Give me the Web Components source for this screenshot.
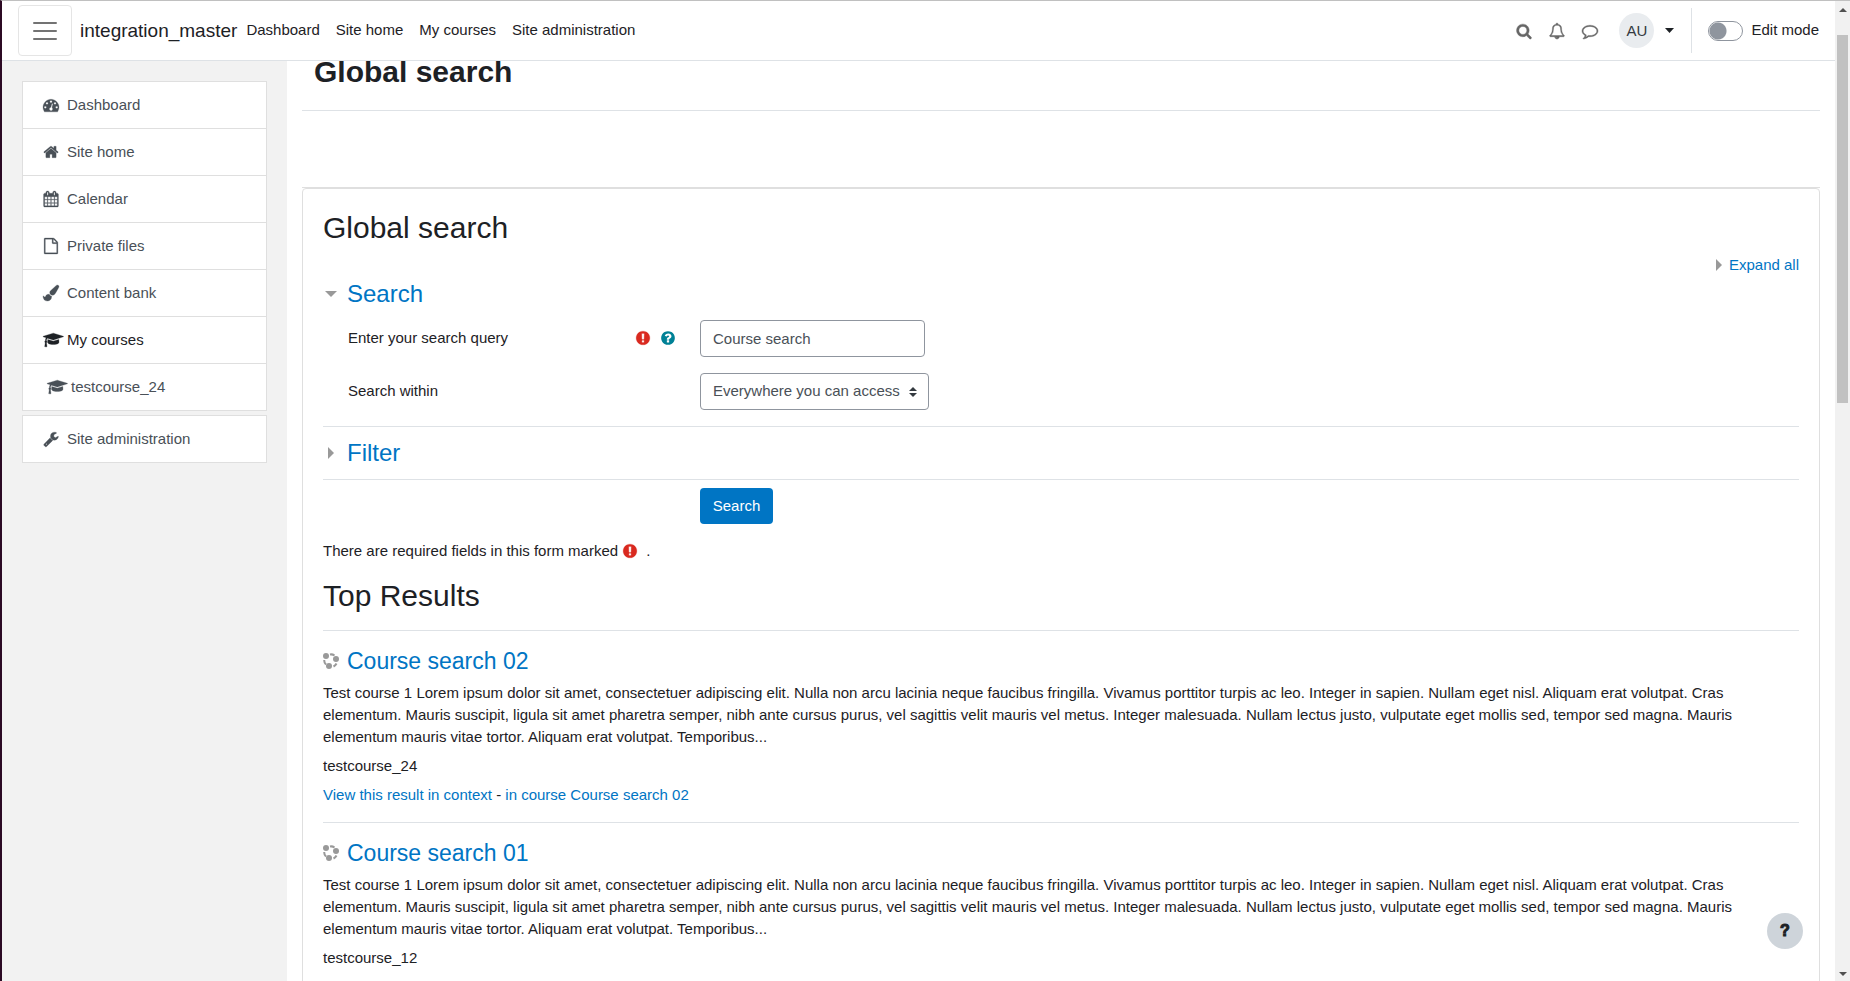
<!DOCTYPE html>
<html lang="en">
<head>
<meta charset="utf-8">
<title>Global search</title>
<style>
  html, body { margin: 0; height: 100%; overflow: hidden; }
  body {
    font: 15px/22px "Liberation Sans", Arial, sans-serif;
    color: #1d2125;
    background: #fff;
    --link: #0075c4;
    --line: #dee2e6;
    --box: #dfdfdf;
  }
</style>
</head>
<body>
<page-shell>
  <top-bar slot="bar"></top-bar>
  <nav-drawer slot="drawer">
    <nav-item icon="dash">Dashboard</nav-item>
    <nav-item icon="home">Site home</nav-item>
    <nav-item icon="calendar">Calendar</nav-item>
    <nav-item icon="file">Private files</nav-item>
    <nav-item icon="brush">Content bank</nav-item>
    <nav-item icon="cap" active>My courses</nav-item>
    <nav-item icon="cap" nested>testcourse_24</nav-item>
    <nav-item slot="admin" icon="wrench">Site administration</nav-item>
  </nav-drawer>
  <page-header>Global search</page-header>
  <content-card>
    <search-form></search-form>
    <result-list>
      <search-result heading="Course search 02" course="testcourse_24" context>Test course 1 Lorem ipsum dolor sit amet, consectetuer adipiscing elit. Nulla non arcu lacinia neque faucibus fringilla. Vivamus porttitor turpis ac leo. Integer in sapien. Nullam eget nisl. Aliquam erat volutpat. Cras elementum. Mauris suscipit, ligula sit amet pharetra semper, nibh ante cursus purus, vel sagittis velit mauris vel metus. Integer malesuada. Nullam lectus justo, vulputate eget mollis sed, tempor sed magna. Mauris elementum mauris vitae tortor. Aliquam erat volutpat. Temporibus...</search-result>
      <search-result heading="Course search 01" course="testcourse_12">Test course 1 Lorem ipsum dolor sit amet, consectetuer adipiscing elit. Nulla non arcu lacinia neque faucibus fringilla. Vivamus porttitor turpis ac leo. Integer in sapien. Nullam eget nisl. Aliquam erat volutpat. Cras elementum. Mauris suscipit, ligula sit amet pharetra semper, nibh ante cursus purus, vel sagittis velit mauris vel metus. Integer malesuada. Nullam lectus justo, vulputate eget mollis sed, tempor sed magna. Mauris elementum mauris vitae tortor. Aliquam erat volutpat. Temporibus...</search-result>
    </result-list>
  </content-card>
  <scroll-rail slot="rail"></scroll-rail>
  <help-button slot="help"></help-button>
</page-shell>

<script>
const ICONS = {
  search: 'M1216 832q0-185-131.5-316.5t-316.5-131.5-316.5 131.5-131.5 316.5 131.5 316.5 316.5 131.5 316.5-131.5 131.5-316.5zm512 832q0 52-38 90t-90 38q-54 0-90-38l-343-342q-179 124-399 124-143 0-273.5-55.5t-225-150-150-225-55.5-273.5 55.5-273.5 150-225 225-150 273.5-55.5 273.5 55.5 225 150 150 225 55.5 273.5q0 220-124 399l343 343q37 37 37 90z',
  bell: 'M912 1696q0-16-16-16-59 0-101.5-42.5t-42.5-101.5q0-16-16-16t-16 16q0 73 51.5 124.5t124.5 51.5q16 0 16-16zm-666-288h1300q-266-300-266-832 0-51-24-105t-69-103-121.5-80.5-169.5-31.5-169.5 31.5-121.5 80.5-69 103-24 105q0 532-266 832zm1482 0q0 52-38 90t-90 38h-448q0 106-75 181t-181 75-181-75-75-181h-448q-52 0-90-38t-38-90q50-42 91-88t85-119.5 74.5-158.5 50-206 19.5-260q0-152 117-282.5t307-158.5q-8-19-8-39 0-40 28-68t68-28 68 28 28 68q0 20-8 39 190 28 307 158.5t117 282.5q0 139 19.5 260t50 206 74.5 158.5 85 119.5 91 88z',
  comment: 'M896 384q-204 0-381.5 69.5t-282 187.5-104.5 255q0 112 71.5 213.5t201.5 175.5l87 50-27 96q-24 91-70 172 152-63 275-171l43-38 57 6q69 8 130 8 204 0 381.5-69.5t282-187.5 104.5-255-104.5-255-282-187.5-381.5-69.5zm896 512q0 174-120 321.5t-326 233-450 85.5q-70 0-145-8-198 175-460 242-49 14-114 22h-5q-15 0-27-10.5t-16-27.5v-1q-3-4-.5-12t2-10 4.5-9.5l6-9 7-8.5 8-9q7-8 31-34.5t34.5-38 31-39.5 32.5-51 27-59 26-76q-157-89-247.5-220t-90.5-281q0-130 71-248.5t191-204.5 286-136.5 348-50.5 348 50.5 286 136.5 191 204.5 71 248.5z',
  dash: 'M384 1152q0-53-37.5-90.5t-90.5-37.5-90.5 37.5-37.5 90.5 37.5 90.5 90.5 37.5 90.5-37.5 37.5-90.5zm192-448q0-53-37.5-90.5t-90.5-37.5-90.5 37.5-37.5 90.5 37.5 90.5 90.5 37.5 90.5-37.5 37.5-90.5zm428 481l101-382q6-26-7.5-48.5t-38.5-29.5-48 6.5-30 39.5l-101 382q-60 5-107 43.5t-63 98.5q-20 77 20 146t117 89 146-20 89-117q16-60-6-117t-72-91zm660-33q0-53-37.5-90.5t-90.5-37.5-90.5 37.5-37.5 90.5 37.5 90.5 90.5 37.5 90.5-37.5 37.5-90.5zm-640-640q0-53-37.5-90.5t-90.5-37.5-90.5 37.5-37.5 90.5 37.5 90.5 90.5 37.5 90.5-37.5 37.5-90.5zm448 192q0-53-37.5-90.5t-90.5-37.5-90.5 37.5-37.5 90.5 37.5 90.5 90.5 37.5 90.5-37.5 37.5-90.5zm320 448q0 261-141 483-19 29-54 29h-1402q-35 0-54-29-141-221-141-483 0-182 71-348t191-286 286-191 348-71 348 71 286 191 191 286 71 348z',
  home: 'M1472 992v480q0 26-19 45t-45 19h-384v-384h-256v384h-384q-26 0-45-19t-19-45v-480q0-1 .5-3t.5-3l575-474 575 474q1 2 1 6zm223-69l-62 74q-8 9-21 11h-3q-13 0-21-7l-692-577-692 577q-12 8-24 7-13-2-21-11l-62-74q-8-10-7-23.5t11-21.5l719-599q32-26 76-26t76 26l244 204v-195q0-14 9-23t23-9h192q14 0 23 9t9 23v408l219 182q10 8 11 21.5t-7 23.5z',
  calendar: 'M192 1664h288v-288h-288v288zm352 0h320v-288h-320v288zm-352-352h288v-320h-288v320zm352 0h320v-320h-320v320zm-352-384h288v-288h-288v288zm736 736h320v-288h-320v288zm-384-736h320v-288h-320v288zm768 736h288v-288h-288v288zm-384-352h320v-320h-320v320zm-352-864v-288q0-13-9.5-22.5t-22.5-9.5h-64q-13 0-22.5 9.5t-9.5 22.5v288q0 13 9.5 22.5t22.5 9.5h64q13 0 22.5-9.5t9.5-22.5zm736 864h288v-320h-288v320zm-384-384h320v-288h-320v288zm384 0h288v-288h-288v288zm32-480v-288q0-13-9.5-22.5t-22.5-9.5h-64q-13 0-22.5 9.5t-9.5 22.5v288q0 13 9.5 22.5t22.5 9.5h64q13 0 22.5-9.5t9.5-22.5zm384-64v1280q0 52-38 90t-90 38h-1408q-52 0-90-38t-38-90v-1280q0-52 38-90t90-38h128v-96q0-66 47-113t113-47h64q66 0 113 47t47 113v96h384v-96q0-66 47-113t113-47h64q66 0 113 47t47 113v96h128q52 0 90 38t38 90z',
  file: 'M1596 380q28 28 48 76t20 88v1152q0 40-28 68t-68 28h-1344q-40 0-68-28t-28-68v-1600q0-40 28-68t68-28h896q40 0 88 20t76 48zm-444-244v376h376q-10-29-22-41l-313-313q-12-12-41-22zm384 1528v-1024h-416q-40 0-68-28t-28-68v-416h-768v1536h1280z',
  brush: 'M1615 0q70 0 122.5 46.5t52.5 116.5q0 63-45 151-332 629-465 752-97 91-218 91-126 0-216.5-92.5t-90.5-219.5q0-128 92-212l638-579q59-54 130-54zm-909 1034q39 76 106.5 130t150.5 76l1 71q4 213-129.5 347t-348.5 134q-123 0-218-46.5t-152.5-127.5-86.5-183-29-220q7 5 41 30t62 44.5 59 36.5 46 17q41 0 55-37 25-66 57.5-112.5t69.5-76 88-47.5 103-25.5 125-10.5z',
  cap: 'M1774 836l18 316q4 69-82 128t-235 93.5-323 34.5-323-34.5-235-93.5-82-128l18-316 574 181q22 7 48 7t48-7zm530-324q0 23-22 31l-1120 352q-4 1-10 1t-10-1l-652-206q-43 34-71 111.5t-34 178.5q63 36 63 109 0 69-58 107l58 433q2 14-8 25-9 11-24 11h-192q-15 0-24-11-10-11-8-25l58-433q-58-38-58-107 0-73 65-111 11-207 98-330l-333-104q-22-8-22-31t22-31l1120-352q4-1 10-1t10 1l1120 352q22 8 22 31z',
  wrench: 'M448 1472q0-26-19-45t-45-19-45 19-19 45 19 45 45 19 45-19 19-45zm644-420l-682 682q-37 37-90 37-52 0-91-37l-106-108q-38-36-38-90 0-53 38-91l681-681q39 98 114.5 173.5t173.5 114.5zm634-435q0 39-23 106-47 134-164.5 217.5t-258.5 83.5q-185 0-316.5-131.5t-131.5-316.5 131.5-316.5 316.5-131.5q58 0 121.5 16.5t107.5 46.5q16 11 16 28t-16 28l-293 169v224l193 107q5-3 79-48.5t135.5-81 70.5-35.5q15 0 23.5 10t8.5 25z',
  required: 'M896 128q209 0 385.5 103t279.5 279.5 103 385.5-103 385.5-279.5 279.5-385.5 103-385.5-103-279.5-279.5-103-385.5 103-385.5 279.5-279.5 385.5-103zm128 1247v-190q0-14-9-23.5t-22-9.5h-192q-13 0-23 10t-10 23v190q0 13 10 23t23 10h192q13 0 22-9.5t9-23.5zm-2-344l18-621q0-12-10-18-10-8-24-8h-220q-14 0-24 8-10 6-10 18l17 621q0 10 10 17.5t24 7.5h185q14 0 23.5-7.5t10.5-17.5z',
  help: 'M1024 1376v-192q0-14-9-23t-23-9h-192q-14 0-23 9t-9 23v192q0 14 9 23t23 9h192q14 0 23-9t9-23zm256-672q0-88-55.5-163t-138.5-116-170-41q-243 0-371 213-15 24 8 42l132 100q7 6 19 6 16 0 25-12 53-68 86-92 34-24 86-24 48 0 85.5 26t37.5 59q0 38-20 61t-68 45q-63 28-115.5 86.5t-52.5 125.5v36q0 14 9 23t23 9h192q14 0 23-9t9-23q0-19 21.5-49.5t54.5-49.5q32-18 49-28.5t46-35 44.5-48 28-60.5 12.5-81zm384 192q0 209-103 385.5t-279.5 279.5-385.5 103-385.5-103-279.5-279.5-103-385.5 103-385.5 279.5-279.5 385.5-103 385.5 103 279.5 279.5 103 385.5z'
};

const BASE = '<style>*{box-sizing:border-box}a{color:var(--link);text-decoration:none}button,input,select{font:inherit;margin:0}h1,h2,h3,p{margin:0;font-weight:400}</style>';

function define(name, render) {
  customElements.define(name, class extends HTMLElement {
    constructor() {
      super();
      this.attachShadow({ mode: 'open' });
    }
    connectedCallback() {
      this.shadowRoot.innerHTML = BASE + render(this);
    }
  });
}

define('fa-icon', el => {
  const name = el.getAttribute('name');
  const wide = name === 'cap';
  return `<style>
    :host { display: inline-flex; flex: none; }
    svg { display: block; fill: currentColor; stroke: currentColor; stroke-width: var(--weight, 0); overflow: visible; }
  </style>
  <svg width="${wide ? 21 : 16}" height="16" viewBox="0 0 ${wide ? 2352 : 1792} 1792" aria-hidden="true"><path d="${ICONS[name]}"/></svg>`;
});

define('page-shell', () => `<style>
    :host {
      display: grid;
      grid-template: auto minmax(0, 1fr) / 285px minmax(0, 1fr) 15px;
      height: 100vh;
      box-sizing: border-box;
      border-top: 1px solid #c0c0c0;
      border-left: 2px solid #2c0a24;
      overflow: hidden;
    }
    .bar { grid-area: 1 / 1 / 2 / 3; z-index: 1; }
    .drawer { grid-area: 2 / 1; background: #f2f2f2; padding: 20px; }
    main { grid-area: 2 / 2; padding: 0 15px; overflow: hidden; }
    .rail { grid-area: 1 / 3 / 3 / 4; display: grid; }
    .help { position: fixed; right: 47px; bottom: 32px; }
  </style>
  <header class="bar"><slot name="bar"></slot></header>
  <aside class="drawer"><slot name="drawer"></slot></aside>
  <main><slot></slot></main>
  <div class="rail"><slot name="rail"></slot></div>
  <div class="help"><slot name="help"></slot></div>`);

define('top-bar', () => `<style>
    :host {
      display: flex;
      align-items: center;
      height: 60px;
      box-sizing: border-box;
      padding: 0 16px;
      background: #fff;
      border-bottom: 1px solid var(--line);
    }
    .burger {
      width: 54px; height: 51px; padding: 0;
      display: grid; place-items: center;
      background: none;
      border: 1px solid #e5e5e5;
      border-radius: 4px;
    }
    .brand { font-size: 19px; margin: 0 9px 0 8px; color: inherit; }
    nav { display: flex; gap: 16px; padding-bottom: 2px; }
    nav a { color: inherit; }
    .tools { margin-left: auto; display: flex; align-items: center; color: #666; --weight: 50; }
    .icon { border: 0; background: none; padding: 0; color: inherit; display: flex; margin-right: 17px; }
    .user { border: 0; background: none; padding: 0; margin-left: 4px; display: flex; align-items: center; gap: 11px; color: #1d2125; }
    .avatar { width: 35px; height: 35px; border-radius: 50%; background: #e9ecef; color: #343a40; display: grid; place-items: center; }
    .mode { display: flex; align-items: center; gap: 8px; height: 45px; margin-left: 17px; padding-left: 16px; border-left: 1px solid var(--line); color: #1d2125; }
    .mode label { padding-bottom: 2px; }
    input {
      appearance: none;
      width: 35px; height: 20px;
      border: 1px solid #8f959e;
      border-radius: 10px;
      background: radial-gradient(circle at 9px 9px, #8f959e 8px, #fff 9px);
    }
  </style>
  <button class="burger" aria-label="Side panel">
    <svg width="30" height="30" viewBox="0 0 30 30" stroke="#000" stroke-opacity=".55" stroke-width="2" stroke-linecap="round"><path d="M4 7h22M4 15h22M4 23h22"/></svg>
  </button>
  <a class="brand" href="#">integration_master</a>
  <nav><a href="#">Dashboard</a><a href="#">Site home</a><a href="#">My courses</a><a href="#">Site administration</a></nav>
  <div class="tools">
    <button class="icon" aria-label="Search"><fa-icon name="search"></fa-icon></button>
    <button class="icon" aria-label="Notifications"><fa-icon name="bell"></fa-icon></button>
    <button class="icon" aria-label="Messages"><fa-icon name="comment"></fa-icon></button>
    <button class="user"><span class="avatar">AU</span><svg width="9" height="5" viewBox="0 0 9 5"><path d="M0 0h9L4.500 5z" fill="#1d2125"/></svg></button>
    <div class="mode"><input type="checkbox" role="switch" id="edit"><label for="edit">Edit mode</label></div>
  </div>`);

define('nav-drawer', () => `<style>
    :host { display: flex; flex-direction: column; gap: 4px; }
    nav { background: #fff; border: 1px solid var(--box); border-bottom: 0; }
  </style>
  <nav aria-label="Site"><slot></slot></nav>
  <nav aria-label="Administration"><slot name="admin"></slot></nav>`);

define('nav-item', el => `<style>
    :host { display: block; border-bottom: 1px solid var(--box); --weight: 30; }
    a { display: flex; align-items: center; height: 46px; padding: 0 20px; color: #495057; }
    :host([active]) a { color: #1d2125; }
    :host([nested]) a { padding-left: 24px; }
    .mark { width: 24px; display: flex; }
  </style>
  <a href="#"><span class="mark"><fa-icon name="${el.getAttribute('icon')}"></fa-icon></span><slot></slot></a>`);

define('page-header', () => `<style>
    :host { display: block; padding: 0 12px 27px; border-bottom: 1px solid var(--line); }
    h1 { font-size: 30px; line-height: 22px; font-weight: 700; }
  </style>
  <h1><slot></slot></h1>`);

define('content-card', () => `<style>
    :host { display: block; margin-top: 76px; border-top: 1px solid var(--box); }
    section { border: 1px solid var(--box); border-radius: 4px; padding: 21px 20px; height: 100vh; }
    h2 { font-size: 30px; line-height: 36px; margin-bottom: 8px; }
  </style>
  <section><h2>Global search</h2><slot></slot></section>`);

define('search-form', () => `<style>
    :host { display: block; }
    .expand { display: flex; justify-content: flex-end; align-items: center; gap: 7px; margin-bottom: 4px; }
    .head { display: flex; align-items: center; line-height: 28px; font-size: 24px; }
    .twist { width: 24px; display: flex; }
    .twist svg { margin-left: 2px; }
    .closed svg { margin-left: 5px; }
    .closed { border: 1px solid var(--line); border-width: 1px 0; padding: 12px 0; }
    svg { display: block; fill: #999; }
    .row { display: grid; grid-template-columns: 352px 1fr; align-items: center; padding-left: 25px; margin-bottom: 16px; }
    .first { margin-top: 12px; }
    .label { display: flex; justify-content: space-between; align-items: center; padding: 0 24px 2px 0; }
    .marks { display: flex; gap: 9px; }
    .req { color: #d9291f; --weight: 30; }
    .tip { color: #008196; border: 0; padding: 0; background: none; display: flex; }
    input, select {
      height: 37px; padding: 0 12px;
      border: 1px solid #8f959e; border-radius: 4px;
      color: #495057; background: #fff;
    }
    input { width: 225px; }
    .pick { position: relative; display: inline-block; justify-self: start; }
    select { appearance: none; width: 229px; display: block; padding-bottom: 1px; }
    .pick svg { position: absolute; right: 12px; top: 14px; fill: #343a40; pointer-events: none; }
    .go { margin: 8px 0 16px 377px; width: 73px; height: 36px; padding: 0; border: 0; border-radius: 4px; background: #0075c4; color: #fff; display: block; }
    p { display: flex; align-items: center; }
    p .req { margin: 0 8px 0 4px; }
  </style>
  <form>
    <div class="expand"><svg width="6" height="12"><path d="M0 0l6 6-6 6z"/></svg><a href="#">Expand all</a></div>
    <h3 class="head"><span class="twist"><svg width="12" height="6"><path d="M0 0h12L6 6z"/></svg></span><a href="#">Search</a></h3>
    <div class="row first">
      <div class="label"><label for="q">Enter your search query</label><span class="marks"><fa-icon class="req" name="required"></fa-icon><button class="tip" type="button" aria-label="Help"><fa-icon name="help"></fa-icon></button></span></div>
      <input id="q" type="text" value="Course search">
    </div>
    <div class="row">
      <div class="label"><label for="area">Search within</label></div>
      <span class="pick"><select id="area"><option>Everywhere you can access</option></select><svg width="8" height="10" viewBox="0 0 8 10"><path d="M0 4l4-4 4 4zM0 6h8l-4 4z"/></svg></span>
    </div>
    <h3 class="head closed"><span class="twist"><svg width="6" height="12"><path d="M0 0l6 6-6 6z"/></svg></span><a href="#">Filter</a></h3>
    <button class="go" type="button">Search</button>
    <p>There are required fields in this form marked <fa-icon class="req" name="required"></fa-icon> .</p>
  </form>`);

define('result-list', () => `<style>
    :host { display: block; margin-top: 16px; }
    h2 { font-size: 30px; line-height: 36px; margin-bottom: 16px; }
  </style>
  <h2>Top Results</h2><slot></slot>`);

define('search-result', el => `<style>
    :host { display: block; border-top: 1px solid var(--line); padding: 16px 0; }
    h3 { display: flex; align-items: center; gap: 8px; font-size: 23px; line-height: 28px; margin-bottom: 7px; }
    p { margin-bottom: 7px; }
    svg { display: block; fill: #999; }
  </style>
  <h3><svg width="16" height="16" viewBox="0 0 16 16"><circle cx="3" cy="3" r="3"/><circle cx="13" cy="6" r="3"/><circle cx="6" cy="13" r="3"/><path d="M7 1.500q2.500-.5 4.500 1M1.300 7q-.3 2.500 1.700 4.500M13.500 10.500q-1 2-3 3" fill="none" stroke="#999" stroke-width="2"/></svg><a href="#">${el.getAttribute('heading')}</a></h3>
  <p><slot></slot></p>
  <p>${el.getAttribute('course')}</p>
  ${el.hasAttribute('context') ? `<div><a href="#">View this result in context</a> - <a href="#">in course ${el.getAttribute('heading')}</a></div>` : ''}`);

define('scroll-rail', () => `<style>
    :host { display: flex; flex-direction: column; align-items: center; background: #f1f1f1; padding: 7px 0 5px; }
    i { width: 11px; flex: 0 0 38%; margin: 23px 0 auto; background: #c1c1c1; }
    svg { display: block; fill: #505050; }
  </style>
  <svg width="8" height="4"><path d="M0 4l4-4 4 4z"/></svg><i></i><svg width="8" height="4"><path d="M0 0h8L4 4z"/></svg>`);

define('help-button', () => `<style>
    :host { display: block; }
    button { width: 36px; height: 36px; padding: 0; border: 0; border-radius: 50%; background: #ced4da; color: #1d2125; font-weight: 700; font-size: 16px; -webkit-text-stroke: 1px; }
  </style>
  <button aria-label="Help">?</button>`);
</script>
</body>
</html>
